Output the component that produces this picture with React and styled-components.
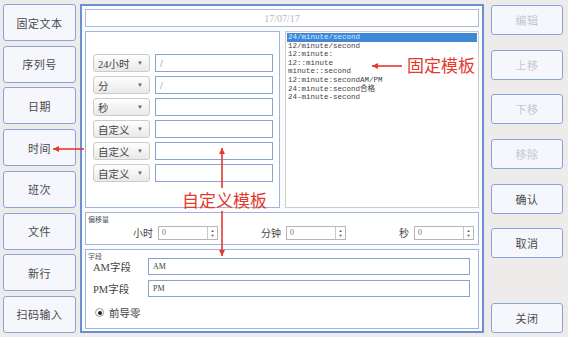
import React from 'react';
import styled, { createGlobalStyle, css } from 'styled-components';

const GlobalStyle = createGlobalStyle`
  html, body {
    margin: 0;
    padding: 0;
    background: #eeecea;
  }
  * {
    box-sizing: border-box;
  }
`;

const serif = `"Liberation Serif", "Noto Sans CJK SC", serif`;
const red = '#e5392c';

const Page = styled.div`
  position: relative;
  width: 568px;
  height: 337px;
  padding: 4px 5px 4px 3px;
  display: flex;
  gap: 4px;
  font-family: ${serif};
  color: #333;
  overflow: hidden;
`;

const LeftColumn = styled.div`
  width: 73px;
  display: flex;
  flex-direction: column;
  justify-content: space-between;
`;

const RightColumn = styled.div`
  width: 72px;
  margin-left: 3px;
  padding-top: 1px;
  display: flex;
  flex-direction: column;
  gap: 14.7px;
`;

const Button = styled.div`
  height: ${(p) => (p.short ? '30px' : '37px')};
  border: 1.5px solid #8ba3d8;
  border-radius: 3px;
  background: #f5f7fc;
  display: flex;
  align-items: center;
  justify-content: center;
  font-size: 11px;
  color: #4a4a4a;
  letter-spacing: 0.5px;

  ${(p) =>
    p.disabled &&
    css`
      color: #c4c7ce;
    `}

  ${(p) =>
    p.bottom &&
    css`
      margin-top: auto;
    `}
`;

const Main = styled.div`
  width: 404px;
  border: 2px solid #6b8fd7;
  background: #fcfcfd;
  padding: 3px 3px 2px 3px;
  display: flex;
  flex-direction: column;
  gap: 4px;
`;

const DateField = styled.div`
  height: 18px;
  border: 1px solid #a7badf;
  background: #fff;
  display: flex;
  align-items: center;
  justify-content: center;
  font-size: 10px;
  color: #b9b9b9;
`;

const MiddleRow = styled.div`
  height: 177px;
  display: flex;
  gap: 5px;
`;

const Group = styled.div`
  position: relative;
  border: 1px solid #9fb5e1;
  background: #fff;
`;

const CustomGroup = styled(Group)`
  width: 195px;
  padding: 22px 6px 0 7px;
  display: flex;
  flex-direction: column;
  gap: 4px;
`;

const SegmentRow = styled.div`
  height: 18px;
  display: flex;
  gap: 5px;
`;

const Select = styled.div`
  width: 57px;
  border: 1px solid #cbcbcb;
  border-radius: 3px;
  background: linear-gradient(#fefefe, #e9e9e9);
  display: flex;
  align-items: center;
  justify-content: space-between;
  padding: 0 6px 0 4px;
  font-size: 10.5px;
  color: #444;
`;

const Caret = styled.span`
  font-size: 6px;
  color: #666;
`;

const TextBox = styled.div`
  flex: 1;
  height: ${(p) => (p.tall ? '17px' : 'auto')};
  border: 1px solid #86a2d6;
  background: #fff;
  display: flex;
  align-items: center;
  padding: 0 4px;
  font-size: ${(p) => (p.small ? '8px' : '10px')};
  color: ${(p) => (p.small ? '#444' : '#777')};
`;

const TemplateList = styled.div`
  flex: 1;
  border: 1px solid #cfcac4;
  background: #fff;
  padding: 1px 1px 0 1px;
  display: flex;
  flex-direction: column;
`;

const ListItem = styled.div`
  height: 8.6px;
  line-height: 8.6px;
  font-family: "Liberation Mono", "Noto Sans CJK SC", monospace;
  font-size: 7.5px;
  padding-left: 1px;
  color: #444;
  white-space: nowrap;

  ${(p) =>
    p.selected &&
    css`
      background: #3e88d8;
      color: #dce9fb;
    `}
`;

const GroupTitle = styled.div`
  position: absolute;
  left: 2px;
  top: 1px;
  font-size: 7px;
  color: #555;
`;

const OffsetGroup = styled(Group)`
  height: 33px;
  display: flex;
  align-items: center;
  padding: 8px 0 0 0;
`;

const OffsetItem = styled.div`
  display: flex;
  align-items: center;
  gap: 5px;
  margin-left: ${(p) => p.offset}px;
`;

const OffsetLabel = styled.span`
  font-size: 10px;
  color: #444;
`;

const Spinner = styled.div`
  width: 60px;
  height: 14px;
  border: 1px solid #b5b5b5;
  background: #fff;
  display: flex;
`;

const SpinValue = styled.div`
  flex: 1;
  font-size: 8px;
  color: #777;
  padding-left: 3px;
  display: flex;
  align-items: center;
`;

const SpinArrows = styled.div`
  width: 10px;
  border-left: 1px solid #c8c8c8;
  display: flex;
  flex-direction: column;
  align-items: center;
  justify-content: center;
  font-size: 4px;
  line-height: 5px;
  color: #555;
`;

const FieldGroup = styled(Group)`
  flex: 1;
  padding: 7px 8px 0 7px;
  display: flex;
  flex-direction: column;
  gap: 4px;
`;

const FieldRow = styled.div`
  height: 18px;
  display: flex;
  align-items: center;
`;

const FieldLabel = styled.span`
  width: 55px;
  font-size: 10.5px;
  color: #444;
`;

const RadioRow = styled.div`
  display: flex;
  align-items: center;
  gap: 5px;
  margin-top: 4px;
  padding-left: 2px;
  font-size: 10.5px;
  color: #444;
`;

const Radio = styled.span`
  width: 9px;
  height: 9px;
  border-radius: 50%;
  border: 1px solid #999;
  background: #fff;
  display: flex;
  align-items: center;
  justify-content: center;

  &::after {
    content: '';
    width: 4px;
    height: 4px;
    border-radius: 50%;
    background: #222;
  }
`;

const Note = styled.div`
  position: absolute;
  left: ${(p) => p.x}px;
  top: ${(p) => p.y}px;
  font-family: "Noto Sans CJK SC", sans-serif;
  font-size: 17px;
  line-height: 17px;
  color: ${red};
  white-space: nowrap;
`;

const Overlay = styled.svg`
  position: absolute;
  left: 0;
  top: 0;
  pointer-events: none;
`;

const leftButtons = ['固定文本', '序列号', '日期', '时间', '班次', '文件', '新行', '扫码输入'];

const segments = [
  { type: '24小时', value: '/' },
  { type: '分', value: '/' },
  { type: '秒', value: '' },
  { type: '自定义', value: '' },
  { type: '自定义', value: '' },
  { type: '自定义', value: '' },
];

const templates = [
  '24/minute/second',
  '12/minute/second',
  '12:minute:',
  '12::minute',
  'minute::second',
  '12:minute:secondAM/PM',
  '24:minute:second合格',
  '24-minute-second',
];

const offsets = [
  { label: '小时', offset: 47 },
  { label: '分钟', offset: 43 },
  { label: '秒', offset: 53 },
];

function Arrow({ x1, y1, x2, y2 }) {
  const angle = Math.atan2(y2 - y1, x2 - x1);
  const size = 6;
  const left = [
    x2 - size * Math.cos(angle) + 3 * Math.sin(angle),
    y2 - size * Math.sin(angle) - 3 * Math.cos(angle),
  ];
  const right = [
    x2 - size * Math.cos(angle) - 3 * Math.sin(angle),
    y2 - size * Math.sin(angle) + 3 * Math.cos(angle),
  ];
  return (
    <g>
      <line x1={x1} y1={y1} x2={x2} y2={y2} stroke={red} strokeWidth="1.6" />
      <polygon points={`${x2},${y2} ${left.join(',')} ${right.join(',')}`} fill={red} />
    </g>
  );
}

function App() {
  return (
    <Page>
      <GlobalStyle />
      <LeftColumn>
        {leftButtons.map((label) => (
          <Button key={label}>{label}</Button>
        ))}
      </LeftColumn>

      <Main>
        <DateField>17/07/17</DateField>

        <MiddleRow>
          <CustomGroup>
            {segments.map((seg, index) => (
              <SegmentRow key={index}>
                <Select>
                  {seg.type}
                  <Caret>▼</Caret>
                </Select>
                <TextBox>{seg.value}</TextBox>
              </SegmentRow>
            ))}
          </CustomGroup>

          <TemplateList>
            {templates.map((item, index) => (
              <ListItem key={item} selected={index === 0}>
                {item}
              </ListItem>
            ))}
          </TemplateList>
        </MiddleRow>

        <OffsetGroup>
          <GroupTitle>偏移量</GroupTitle>
          {offsets.map((item) => (
            <OffsetItem key={item.label} offset={item.offset}>
              <OffsetLabel>{item.label}</OffsetLabel>
              <Spinner>
                <SpinValue>0</SpinValue>
                <SpinArrows>
                  <span>▲</span>
                  <span>▼</span>
                </SpinArrows>
              </Spinner>
            </OffsetItem>
          ))}
        </OffsetGroup>

        <FieldGroup>
          <GroupTitle>字段</GroupTitle>
          <FieldRow>
            <FieldLabel>AM字段</FieldLabel>
            <TextBox small tall>AM</TextBox>
          </FieldRow>
          <FieldRow>
            <FieldLabel>PM字段</FieldLabel>
            <TextBox small tall>PM</TextBox>
          </FieldRow>
          <RadioRow>
            <Radio />
            前导零
          </RadioRow>
        </FieldGroup>
      </Main>

      <RightColumn>
        <Button short disabled>编辑</Button>
        <Button short disabled>上移</Button>
        <Button short disabled>下移</Button>
        <Button short disabled>移除</Button>
        <Button short>确认</Button>
        <Button short>取消</Button>
        <Button short bottom>关闭</Button>
      </RightColumn>

      <Note x={407} y={56}>固定模板</Note>
      <Note x={182} y={191}>自定义模板</Note>

      <Overlay width="568" height="337">
        <Arrow x1={402} y1={66} x2={372} y2={66} />
        <Arrow x1={84} y1={149} x2={53} y2={149} />
        <Arrow x1={222} y1={188} x2={222} y2={148} />
        <Arrow x1={222} y1={211} x2={222} y2={256} />
      </Overlay>
    </Page>
  );
}

export default App;
